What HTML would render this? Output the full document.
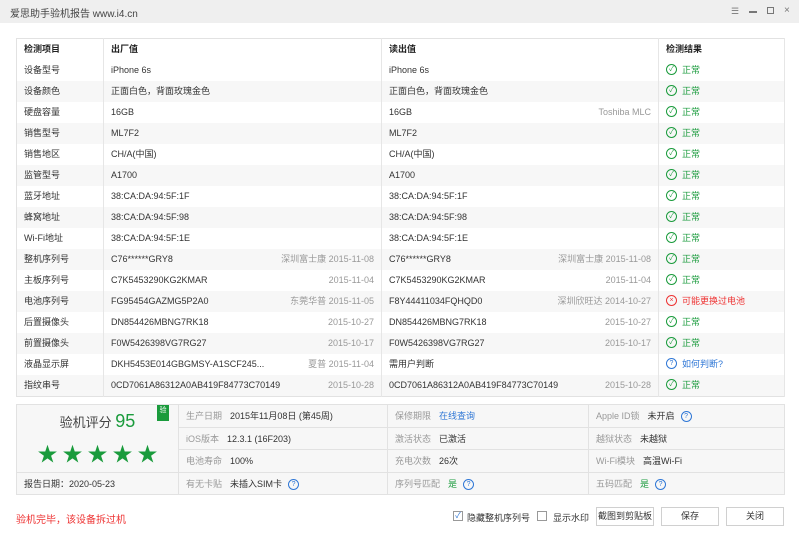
<!DOCTYPE html>
<html><head><meta charset="utf-8"><style>
*{margin:0;padding:0;box-sizing:border-box}
body{width:799px;height:544px;background:#fff;font-family:"Liberation Sans","Noto Sans CJK SC",sans-serif;font-size:9px;color:#333;position:relative;overflow:hidden}
.tb{position:absolute;left:0;top:0;width:799px;height:23px;background:#efefef;}
.tb .t{position:absolute;left:10px;top:5px;font-size:10px;color:#444}
table{border-collapse:collapse;table-layout:fixed}
.main{position:absolute;left:16px;top:38px;width:768px;border:1px solid #e2e2e2}
.main td{height:21px;line-height:21px;padding:0 0 0 7px;white-space:nowrap;overflow:hidden;border-right:1px solid #e6e6e6;vertical-align:middle}
.main td>div{display:flex;justify-content:space-between;padding-right:7px}
.main tr:nth-child(odd){background:#f7f7f7}
.main tr:first-child{background:#fff}
.main tr:first-child td{font-weight:bold;color:#222}
.r{color:#999}
.ok{color:#1a9b3c}.bad{color:#e33}.q{color:#2f77d6}
.ic{display:inline-block;width:11px;height:11px;border:1px solid currentColor;border-radius:50%;font-size:7px;line-height:9px;text-align:center;margin-right:5px;vertical-align:middle;position:relative;top:-1px}
.bp{position:absolute;left:16px;top:404px;width:768px;height:91px;border:1px solid #e2e2e2;background:#f7f7f7}
.bp td{border:1px solid #e2e2e2;height:22.5px;padding-left:7px;white-space:nowrap;vertical-align:middle}
.l{color:#999;margin-right:8px}
.qi{display:inline-block;width:11px;height:11px;border:1px solid #2f77d6;color:#2f77d6;border-radius:50%;font-size:7px;line-height:9px;text-align:center;margin-left:6px;vertical-align:middle}
.btn{position:absolute;top:507px;height:19px;border:1px solid #d0d0d0;background:#fff;font-size:9px;text-align:center;line-height:17px}
</style></head><body>
<div class="tb"><span class="t">爱思助手验机报告 www.i4.cn</span>
<span style="position:absolute;left:731px;top:6px;color:#777;font-size:9px">☰</span>
<span style="position:absolute;left:749px;top:11px;width:8px;height:1.5px;background:#777"></span>
<span style="position:absolute;left:767px;top:7px;width:7px;height:7px;border:1.5px solid #777"></span>
<span style="position:absolute;left:784px;top:5px;color:#777;font-size:10px">×</span>
</div>
<table class="main">
<colgroup><col style="width:87px"><col style="width:278px"><col style="width:277px"><col style="width:126px"></colgroup>
<tr><td>检测项目</td><td>出厂值</td><td>读出值</td><td>检测结果</td></tr>
<tr><td>设备型号</td><td>iPhone 6s</td><td>iPhone 6s</td><td class="ok"><span class="ic">✓</span>正常</td></tr>
<tr><td>设备颜色</td><td>正面白色，背面玫瑰金色</td><td>正面白色，背面玫瑰金色</td><td class="ok"><span class="ic">✓</span>正常</td></tr>
<tr><td>硬盘容量</td><td>16GB</td><td><div><span>16GB</span><span class="r">Toshiba MLC</span></div></td><td class="ok"><span class="ic">✓</span>正常</td></tr>
<tr><td>销售型号</td><td>ML7F2</td><td>ML7F2</td><td class="ok"><span class="ic">✓</span>正常</td></tr>
<tr><td>销售地区</td><td>CH/A(中国)</td><td>CH/A(中国)</td><td class="ok"><span class="ic">✓</span>正常</td></tr>
<tr><td>监管型号</td><td>A1700</td><td>A1700</td><td class="ok"><span class="ic">✓</span>正常</td></tr>
<tr><td>蓝牙地址</td><td>38:CA:DA:94:5F:1F</td><td>38:CA:DA:94:5F:1F</td><td class="ok"><span class="ic">✓</span>正常</td></tr>
<tr><td>蜂窝地址</td><td>38:CA:DA:94:5F:98</td><td>38:CA:DA:94:5F:98</td><td class="ok"><span class="ic">✓</span>正常</td></tr>
<tr><td>Wi-Fi地址</td><td>38:CA:DA:94:5F:1E</td><td>38:CA:DA:94:5F:1E</td><td class="ok"><span class="ic">✓</span>正常</td></tr>
<tr><td>整机序列号</td><td><div><span>C76******GRY8</span><span class="r">深圳富士康 2015-11-08</span></div></td><td><div><span>C76******GRY8</span><span class="r">深圳富士康 2015-11-08</span></div></td><td class="ok"><span class="ic">✓</span>正常</td></tr>
<tr><td>主板序列号</td><td><div><span>C7K5453290KG2KMAR</span><span class="r">2015-11-04</span></div></td><td><div><span>C7K5453290KG2KMAR</span><span class="r">2015-11-04</span></div></td><td class="ok"><span class="ic">✓</span>正常</td></tr>
<tr><td>电池序列号</td><td><div><span>FG95454GAZMG5P2A0</span><span class="r">东莞华普 2015-11-05</span></div></td><td><div><span>F8Y44411034FQHQD0</span><span class="r">深圳欣旺达 2014-10-27</span></div></td><td class="bad"><span class="ic">×</span>可能更换过电池</td></tr>
<tr><td>后置摄像头</td><td><div><span>DN854426MBNG7RK18</span><span class="r">2015-10-27</span></div></td><td><div><span>DN854426MBNG7RK18</span><span class="r">2015-10-27</span></div></td><td class="ok"><span class="ic">✓</span>正常</td></tr>
<tr><td>前置摄像头</td><td><div><span>F0W5426398VG7RG27</span><span class="r">2015-10-17</span></div></td><td><div><span>F0W5426398VG7RG27</span><span class="r">2015-10-17</span></div></td><td class="ok"><span class="ic">✓</span>正常</td></tr>
<tr><td>液晶显示屏</td><td><div><span>DKH5453E014GBGMSY-A1SCF245...</span><span class="r">夏普 2015-11-04</span></div></td><td>需用户判断</td><td class="q"><span class="ic">?</span>如何判断?</td></tr>
<tr><td>指纹串号</td><td><div><span>0CD7061A86312A0AB419F84773C70149</span><span class="r">2015-10-28</span></div></td><td><div><span>0CD7061A86312A0AB419F84773C70149</span><span class="r">2015-10-28</span></div></td><td class="ok"><span class="ic">✓</span>正常</td></tr>
</table>
<table class="bp">
<colgroup><col style="width:162px"><col style="width:209px"><col style="width:201px"><col style="width:196px"></colgroup>
<tr><td rowspan="3" style="position:relative;padding:0">
<div style="position:absolute;left:0;right:0;top:6px;text-align:center;font-size:13px;color:#444">验机评分 <span style="color:#1a9b3c;font-size:18px">95</span></div>
<div style="position:absolute;left:0;right:0;top:33px;text-align:center;font-size:20px;color:#1a9b3c;letter-spacing:5px;padding-left:5px">★★★★★</div>
<div style="position:absolute;right:9px;top:0;width:12px;height:16px;background:#1a9b3c;color:#fff;font-size:7px;text-align:center;line-height:12px">验</div>
</td>
<td><span class="l">生产日期</span>2015年11月08日 (第45周)</td><td><span class="l">保修期限</span><span class="q">在线查询</span></td><td><span class="l">Apple ID锁</span>未开启<span class="qi">?</span></td></tr>
<tr><td><span class="l">iOS版本</span>12.3.1 (16F203)</td><td><span class="l">激活状态</span>已激活</td><td><span class="l">越狱状态</span>未越狱</td></tr>
<tr><td><span class="l">电池寿命</span>100%</td><td><span class="l">充电次数</span>26次</td><td><span class="l">Wi-Fi模块</span>高温Wi-Fi</td></tr>
<tr><td>报告日期：2020-05-23</td><td><span class="l">有无卡贴</span>未插入SIM卡<span class="qi">?</span></td><td><span class="l">序列号匹配</span><span class="ok">是</span><span class="qi">?</span></td><td><span class="l">五码匹配</span><span class="ok">是</span><span class="qi">?</span></td></tr>
</table>
<div style="position:absolute;left:16px;top:511px;color:#e33;font-size:10px">验机完毕，该设备拆过机</div>
<span style="position:absolute;left:453px;top:511px;width:10px;height:10px;border:1px solid #999;font-size:8px;line-height:8px;text-align:center;color:#2f77d6">✓</span>
<span style="position:absolute;left:467px;top:511px;font-size:9px">隐藏整机序列号</span>
<span style="position:absolute;left:537px;top:511px;width:10px;height:10px;border:1px solid #999"></span>
<span style="position:absolute;left:553px;top:511px;font-size:9px">显示水印</span>
<div class="btn" style="left:596px;width:58px">截图到剪贴板</div>
<div class="btn" style="left:661px;width:58px">保存</div>
<div class="btn" style="left:726px;width:58px">关闭</div>
</body></html>
